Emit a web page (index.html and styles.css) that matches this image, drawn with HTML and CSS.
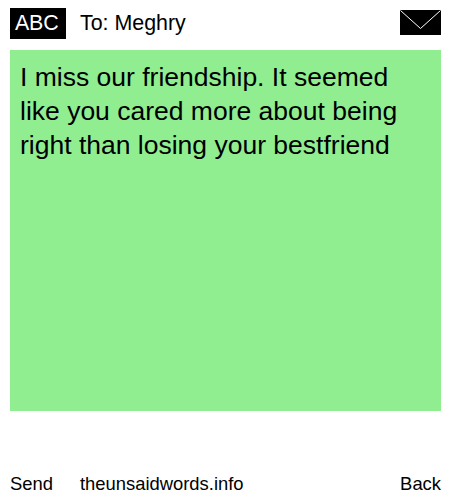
FILE: index.html
```html
<!DOCTYPE html>
<html>
<head>
    <title>The Unsaid Words</title>
    <link rel="stylesheet" href="styles.css">
</head>
<body>
    <div class="phone">
        <div class="top">
            <div class="abc">ABC</div>
            <div class="to">To: Meghry</div>
            <svg class="envelope" width="41" height="25" viewBox="0 0 41 25">
                <rect width="41" height="25" fill="#000"/>
                <path d="M0.5 0.5 L20.5 18.5 L40.5 0.5" fill="none" stroke="#fff" stroke-width="1"/>
            </svg>
        </div>
        <div class="message">I miss our friendship. It seemed like you cared more about being right than losing your bestfriend</div>
        <div class="bottom">
            <div class="send">Send</div>
            <div class="site">theunsaidwords.info</div>
            <div class="back">Back</div>
        </div>
    </div>
</body>
</html>
```

FILE: styles.css
```css
body {
    margin: 0;
    background: white;
    font-family: "Liberation Sans", Arial, sans-serif;
    color: black;
}
.phone {
    width: 431px;
    height: 500px;
    padding: 0 9px 0 10px;
    display: flex;
    flex-direction: column;
}
.top {
    height: 50px;
    display: flex;
    align-items: flex-start;
}
.abc {
    width: 51px;
    height: 31px;
    margin-top: 8px;
    padding-left: 5px;
    background: black;
    color: white;
    font-size: 21.4px;
    line-height: 30px;
    letter-spacing: -0.2px;
}
.to {
    margin-left: 14px;
    margin-top: 12px;
    font-size: 21.4px;
    line-height: 23px;
}
.envelope {
    margin-left: auto;
    margin-top: 10px;
    display: block;
}
.message {
    height: 346px;
    padding: 10px 10px 5px;
    background: #90ee90;
    font-size: 26.5px;
    line-height: 34px;
}
.bottom {
    margin-top: 62px;
    display: flex;
    font-size: 18.4px;
    line-height: 21px;
}
.site {
    margin-left: 27px;
}
.back {
    margin-left: auto;
}
```
